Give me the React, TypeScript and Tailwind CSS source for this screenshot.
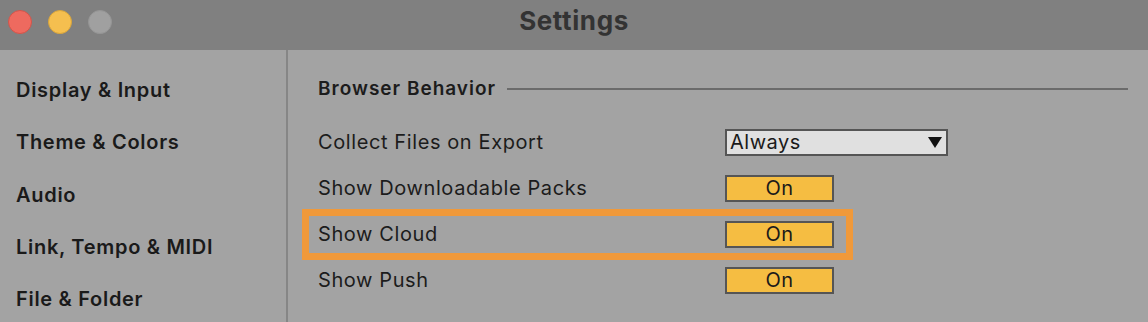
import { ReactNode } from "react";

const font = { fontFamily: "Inter, 'Noto Sans', sans-serif" };

const sections = [
  "Display & Input",
  "Theme & Colors",
  "Audio",
  "Link, Tempo & MIDI",
  "File & Folder",
];

function Toggle() {
  return (
    <div className="w-[109px] h-[27px] border-2 border-[#555555] bg-[#f5bd42] flex items-center justify-center text-[20px] tracking-[0.5px] text-[#1a1a1a] leading-none">
      On
    </div>
  );
}

function Row({ label, children, highlight }: { label: string; children: ReactNode; highlight?: boolean }) {
  return (
    <div className="relative h-[46px] flex items-center">
      {highlight && (
        <div className="absolute left-[-16px] top-[-2px] w-[551px] h-[51px] border-[7px] border-[#f0993a]" />
      )}
      <span className="w-[407px] text-[20px] tracking-[0.6px] text-[#1c1c1c]">{label}</span>
      {children}
    </div>
  );
}

export default function App() {
  return (
    <div className="w-[1148px] h-[322px] bg-[#a3a3a3] flex flex-col overflow-hidden" style={font}>
      <header className="h-[50px] bg-[#808080] relative shrink-0">
        <div className="flex gap-[16px] pl-[8px] pt-[10px]">
          <span className="w-[24px] h-[24px] rounded-full bg-[#ee6a5f] border border-[#d2544a]" />
          <span className="w-[24px] h-[24px] rounded-full bg-[#f5bf4f] border border-[#d9a53a]" />
          <span className="w-[24px] h-[24px] rounded-full bg-[#a0a0a0] border border-[#959595]" />
        </div>
        <h1 className="absolute inset-x-0 top-[3px] text-center text-[26px] leading-[36px] font-bold tracking-[0.6px] text-[#333333]">
          Settings
        </h1>
      </header>
      <div className="flex flex-1">
        <nav className="w-[288px] border-r-2 border-[#868686] pt-[14px] pl-[16px] flex flex-col">
          {sections.map((s) => (
            <div key={s} className="h-[52.3px] flex items-center text-[20px] font-semibold tracking-[0.7px] text-[#1a1a1a]">
              {s}
            </div>
          ))}
        </nav>
        <main className="flex-1 pl-[30px] pr-[20px] pt-[27px]">
          <div className="flex items-center h-[24px] gap-[11px]">
            <span className="text-[19px] font-semibold tracking-[1px] text-[#1c1c1c]">Browser Behavior</span>
            <div className="flex-1 h-[2px] bg-[#6b6b6b]" />
          </div>
          <div className="mt-[18px]">
            <Row label="Collect Files on Export">
              <div className="w-[223px] h-[27px] border-2 border-[#555555] bg-[#e0e0e0] flex items-center justify-between pl-[3px] pr-[4px] text-[20px] tracking-[0.5px] text-[#1a1a1a] leading-none">
                <span>Always</span>
                <svg width="14" height="11" viewBox="0 0 14 11">
                  <path d="M0 0h14L7 11z" fill="#111" />
                </svg>
              </div>
            </Row>
            <Row label="Show Downloadable Packs">
              <Toggle />
            </Row>
            <Row label="Show Cloud" highlight>
              <Toggle />
            </Row>
            <Row label="Show Push">
              <Toggle />
            </Row>
          </div>
        </main>
      </div>
    </div>
  );
}
